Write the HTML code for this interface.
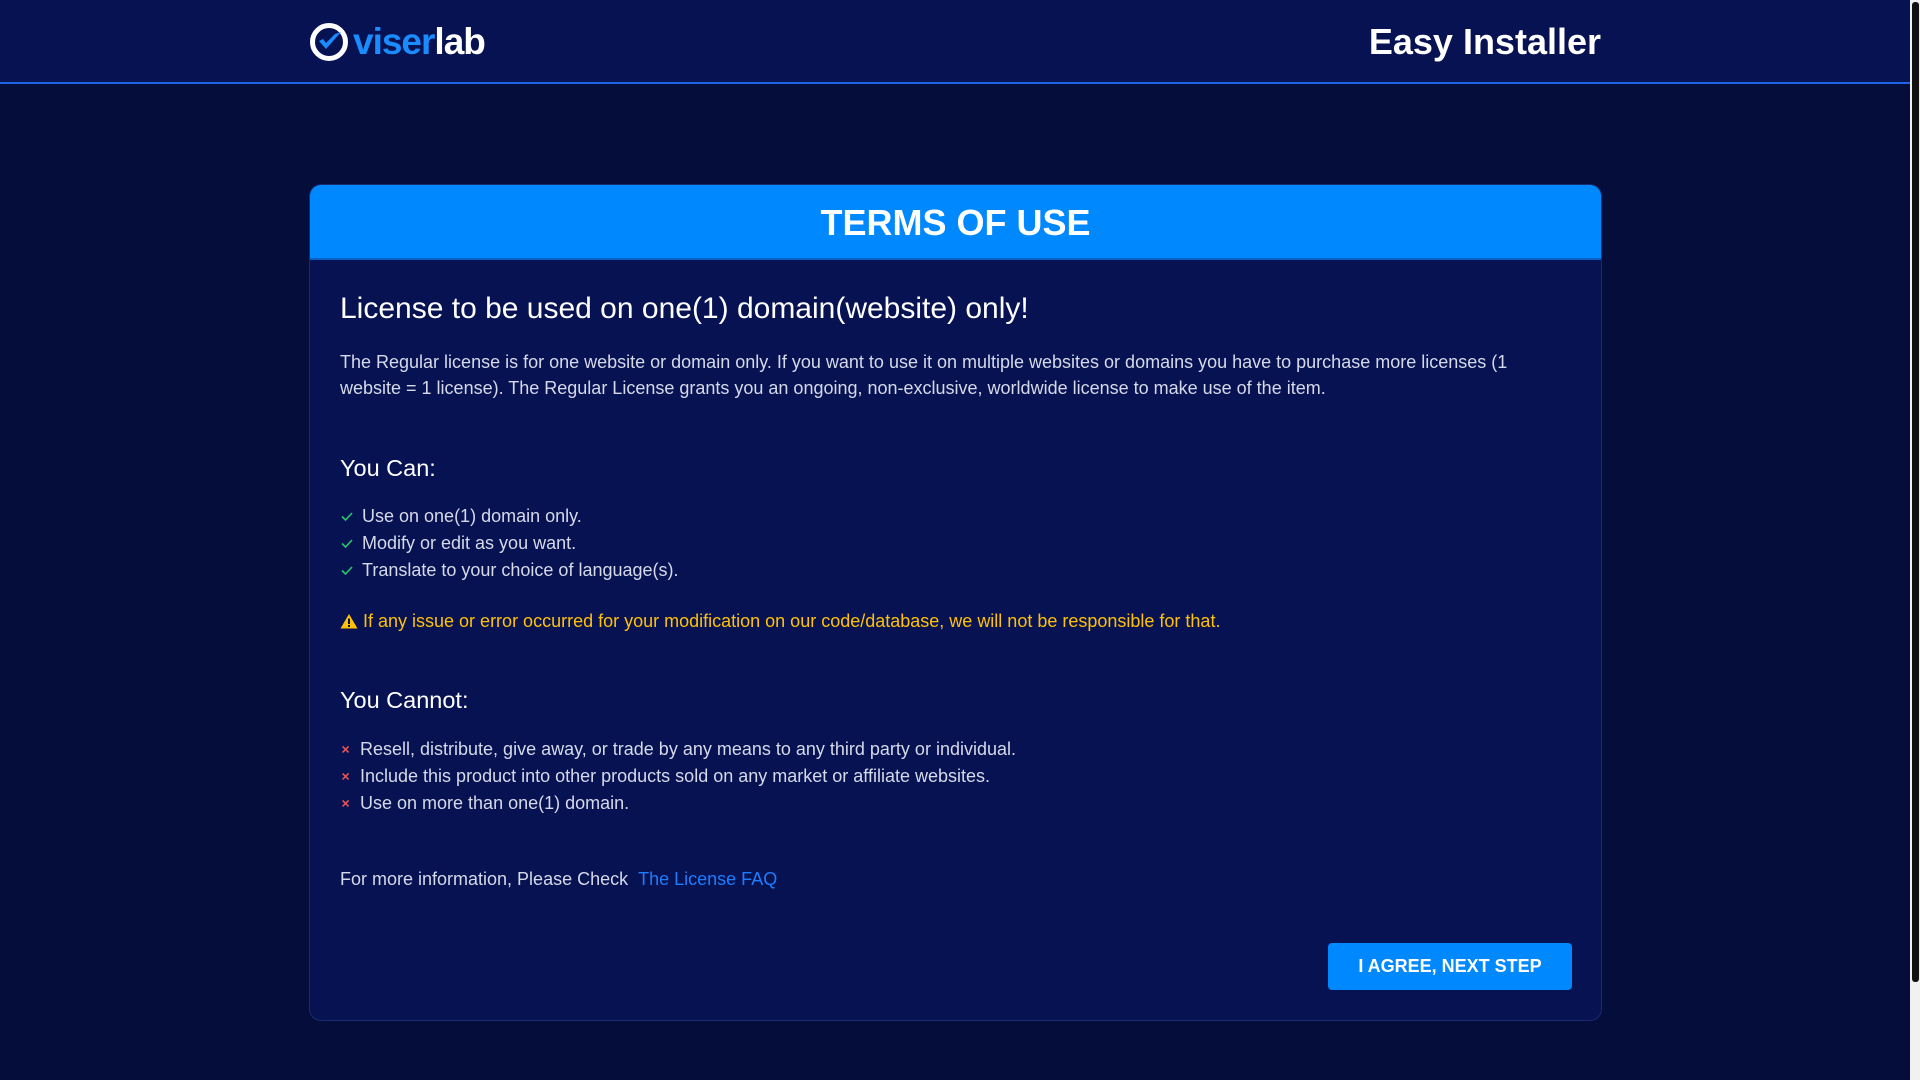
<!DOCTYPE html>
<html><head><meta charset="utf-8"><style>
*{margin:0;padding:0;box-sizing:border-box}
html,body{width:1920px;height:1080px;overflow:hidden}
body{background:#050d3a;font-family:"Liberation Sans",sans-serif;position:relative}
.hdr{position:absolute;left:0;top:0;width:1910px;height:84px;background:#071252;border-bottom:2px solid #1f64e6}
.logo{position:absolute;left:309px;top:22px;display:flex;align-items:center}
.logo span{font-size:37px;font-weight:bold;letter-spacing:-1px;line-height:38px}
.ei{position:absolute;right:319px;top:21px;color:#fff;font-weight:bold;font-size:36px}
.card{position:absolute;left:309px;top:184px;width:1293px;height:837px;background:#071252;border:1px solid #1c2a6e;border-radius:12px;overflow:hidden}
.ch{height:75px;background:#0088ff;color:#fff;font-weight:bold;font-size:36px;text-align:center;line-height:75px;border-bottom:2px solid #0a5fc8}
.t{position:absolute;white-space:nowrap}
.scr{position:absolute;left:1910px;top:0;width:10px;height:1080px;background:#f1f1f1}
.th{position:absolute;left:1912px;top:2px;width:7px;height:980px;background:#111;border-radius:3px}
.btn{position:absolute;left:1018px;top:758px;width:244px;height:47px;background:#0088ff;border-radius:4px;color:#fff;font-weight:bold;font-size:18px;text-align:center;line-height:47px}
.ic{display:inline-block;width:14px;height:14px;margin-right:8px;vertical-align:-1px}
</style></head><body>
<div class="hdr"></div>
<div class="logo">
<svg width="40" height="40" viewBox="0 0 40 40"><circle cx="20" cy="20" r="16.5" fill="none" stroke="#fff" stroke-width="5"/><path d="M10 19 L17 27 L32 10 L26 12 L17 21 L14 17Z" fill="#1a8cff"/></svg>
<span style="color:#1a8cff;margin-left:4px">viser</span><span style="color:#fff">lab</span>
</div>
<div class="ei">Easy Installer</div>
<div class="card">
<div class="ch">TERMS OF USE</div>
<div class="t" style="left:30px;top:107px;font-size:30px;color:#fff">License to be used on one(1) domain(website) only!</div>
<div class="t" style="left:30px;top:164px;font-size:18px;line-height:26px;color:#d5d9e8;white-space:normal;width:1200px">The Regular license is for one website or domain only. If you want to use it on multiple websites or domains you have to purchase more licenses (1 website = 1 license). The Regular License grants you an ongoing, non-exclusive, worldwide license to make use of the item.</div>
<div class="t" style="left:30px;top:270px;font-size:23.5px;color:#fff">You Can:</div>
<div class="t" style="left:30px;top:318px;font-size:18px;line-height:27px;color:#d5d9e8">
<div><svg class="ic" viewBox="0 0 14 14"><path d="M2 7.5 L5.5 11 L12 4" fill="none" stroke="#28c76f" stroke-width="1.6"/></svg>Use on one(1) domain only.</div>
<div><svg class="ic" viewBox="0 0 14 14"><path d="M2 7.5 L5.5 11 L12 4" fill="none" stroke="#28c76f" stroke-width="1.6"/></svg>Modify or edit as you want.</div>
<div><svg class="ic" viewBox="0 0 14 14"><path d="M2 7.5 L5.5 11 L12 4" fill="none" stroke="#28c76f" stroke-width="1.6"/></svg>Translate to your choice of language(s).</div>
</div>
<div class="t" style="left:30px;top:426px;font-size:18px;color:#ffc107"><svg width="18" height="16" viewBox="0 0 18 16" style="vertical-align:-2px"><path d="M9 1 L17.5 15.5 H0.5Z" fill="#ffc107"/><rect x="8" y="5.5" width="2" height="5.5" fill="#071252"/><rect x="8" y="12" width="2" height="2" fill="#071252"/></svg> If any issue or error occurred for your modification on our code/database, we will not be responsible for that.</div>
<div class="t" style="left:30px;top:502px;font-size:23.5px;color:#fff">You Cannot:</div>
<div class="t" style="left:30px;top:551px;font-size:18px;line-height:27px;color:#d5d9e8">
<div><svg class="ic" viewBox="0 0 14 14" style="width:12px;margin-right:8px"><path d="M3 4 L10 11 M10 4 L3 11" stroke="#ea5455" stroke-width="1.8"/></svg>Resell, distribute, give away, or trade by any means to any third party or individual.</div>
<div><svg class="ic" viewBox="0 0 14 14" style="width:12px;margin-right:8px"><path d="M3 4 L10 11 M10 4 L3 11" stroke="#ea5455" stroke-width="1.8"/></svg>Include this product into other products sold on any market or affiliate websites.</div>
<div><svg class="ic" viewBox="0 0 14 14" style="width:12px;margin-right:8px"><path d="M3 4 L10 11 M10 4 L3 11" stroke="#ea5455" stroke-width="1.8"/></svg>Use on more than one(1) domain.</div>
</div>
<div class="t" style="left:30px;top:684px;font-size:18px;color:#d5d9e8">For more information, Please Check &nbsp;<span style="color:#1e7cff">The License FAQ</span></div>
<div class="btn">I AGREE, NEXT STEP</div>
</div>
<div class="scr"></div><div class="th"></div>
</body></html>
